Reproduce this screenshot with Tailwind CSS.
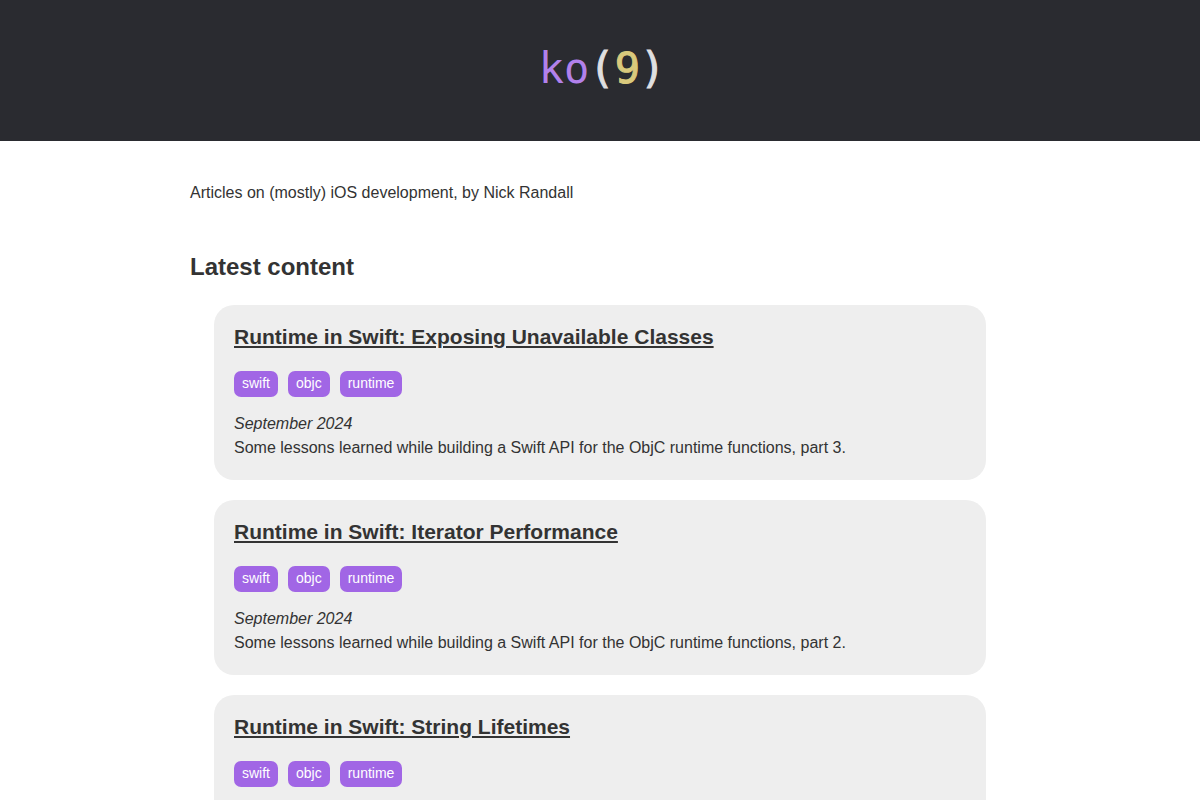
<!DOCTYPE html>
<html lang="en">

<head>
    <meta charset="UTF-8">
    <meta name="viewport" content="width=device-width, initial-scale=1.0">
    <title>ko(9)</title>
    <script src="https://cdn.jsdelivr.net/npm/@tailwindcss/browser@4"></script>
</head>

<body class="bg-white text-[#333333] font-['Liberation_Sans',Arial,sans-serif] text-base">
    <header class="bg-[#2a2b30] flex justify-center pt-11 pb-12 pl-1">
        <a href="/" aria-label="ko(9)" class="font-['DejaVu_Sans_Mono',monospace] text-[42px] leading-[49px] text-[#dfdfe0] [-webkit-text-stroke:1px]"><span class="text-[#b281eb] [-webkit-text-stroke:0]">ko</span>(<span class="text-[#d9c97c]">9</span>)</a>
    </header>

    <main class="max-w-[820px] mx-auto pt-10">
        <p class="leading-6">Articles on (mostly) iOS development, by Nick Randall</p>

        <h2 class="text-2xl leading-9 font-bold mt-11">Latest content</h2>

        <!-- Articles -->
        <div class="mt-5 mx-6 space-y-5">
            <article class="bg-[#eeeeee] rounded-[20px] p-5 pt-4">
                <h3 class="text-[21px] leading-8 font-bold"><a href="#" class="underline">Runtime in Swift: Exposing Unavailable Classes</a></h3>
                <ul class="flex gap-[10px] mt-[18px] text-sm leading-6 text-white">
                    <li class="bg-[#a166e5] rounded-[7px] px-2 pb-0.5">swift</li>
                    <li class="bg-[#a166e5] rounded-[7px] px-2 pb-0.5">objc</li>
                    <li class="bg-[#a166e5] rounded-[7px] px-2 pb-0.5">runtime</li>
                </ul>
                <p class="italic leading-6 mt-[15px]">September 2024</p>
                <p class="leading-6">Some lessons learned while building a Swift API for the ObjC runtime functions, part 3.</p>
            </article>

            <article class="bg-[#eeeeee] rounded-[20px] p-5 pt-4">
                <h3 class="text-[21px] leading-8 font-bold"><a href="#" class="underline">Runtime in Swift: Iterator Performance</a></h3>
                <ul class="flex gap-[10px] mt-[18px] text-sm leading-6 text-white">
                    <li class="bg-[#a166e5] rounded-[7px] px-2 pb-0.5">swift</li>
                    <li class="bg-[#a166e5] rounded-[7px] px-2 pb-0.5">objc</li>
                    <li class="bg-[#a166e5] rounded-[7px] px-2 pb-0.5">runtime</li>
                </ul>
                <p class="italic leading-6 mt-[15px]">September 2024</p>
                <p class="leading-6">Some lessons learned while building a Swift API for the ObjC runtime functions, part 2.</p>
            </article>

            <article class="bg-[#eeeeee] rounded-[20px] p-5 pt-4 pb-10">
                <h3 class="text-[21px] leading-8 font-bold"><a href="#" class="underline">Runtime in Swift: String Lifetimes</a></h3>
                <ul class="flex gap-[10px] mt-[18px] text-sm leading-6 text-white">
                    <li class="bg-[#a166e5] rounded-[7px] px-2 pb-0.5">swift</li>
                    <li class="bg-[#a166e5] rounded-[7px] px-2 pb-0.5">objc</li>
                    <li class="bg-[#a166e5] rounded-[7px] px-2 pb-0.5">runtime</li>
                </ul>
            </article>
        </div>
    </main>
</body>

</html>
